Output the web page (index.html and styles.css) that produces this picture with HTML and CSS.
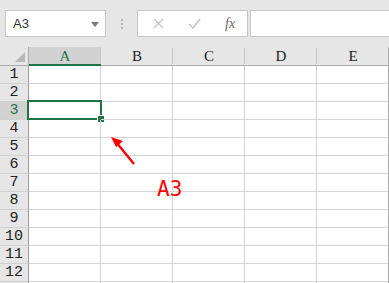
FILE: index.html
```html
<!DOCTYPE html>
<html lang="en">
<head>
    <meta charset="UTF-8">
    <title>Sheet</title>
    <link rel="stylesheet" href="styles.css">
</head>
<body>
    <div class="toolbar">
        <div class="name-box">
            <span>A3</span>
            <svg class="caret" width="8" height="5" viewBox="0 0 8 5"><path d="M0 0h8L4 5z" fill="#7a7a7a"/></svg>
        </div>
        <div class="grip"><i></i><i></i><i></i></div>
        <div class="fx-buttons">
            <svg width="11" height="11" viewBox="0 0 11 11"><path d="M1 1l9 9M10 1l-9 9" stroke="#c4c4c4" stroke-width="1.3"/></svg>
            <svg width="13" height="11" viewBox="0 0 13 11"><path d="M1 6l4 4 7-9" stroke="#c4c4c4" stroke-width="1.6" fill="none"/></svg>
            <span class="fx">fx</span>
        </div>
        <div class="formula"></div>
    </div>

    <div class="sheet">
        <div class="grid">
            <div class="corner"><span></span></div>
            <div class="col-head active">A</div>
            <div class="col-head">B</div>
            <div class="col-head">C</div>
            <div class="col-head">D</div>
            <div class="col-head">E</div>
        </div>
        <div class="grid" id="rows"></div>

        <svg class="arrow" width="60" height="50" viewBox="0 0 60 50">
            <path d="M44 42L26 20" stroke="#f00" stroke-width="2.4"/>
            <path d="M21 15l12 4-7 6z" fill="#f00"/>
        </svg>
        <div class="label">A3</div>
    </div>

    <script>
        const rows = document.getElementById('rows');
        for (let r = 1; r <= 13; r++) {
            const label = r <= 12 ? r : '';
            let html = `<div class="row-head${r === 3 ? ' active' : ''}">${label}</div>`;
            for (let c = 0; c < 5; c++) {
                const sel = r === 3 && c === 0;
                html += `<div class="cell">${sel ? '<div class="selection"><b></b></div>' : ''}</div>`;
            }
            rows.insertAdjacentHTML('beforeend', html);
        }
    </script>
</body>
</html>
```

FILE: styles.css
```css
body {
    margin: 0;
    background: #fff;
    font-family: 'Liberation Sans', Arial, sans-serif;
    height: 283px;
    overflow: hidden;
}
.toolbar {
    background: #e6e6e6;
    height: 47px;
    display: flex;
    align-items: flex-start;
    padding: 10px 0 0 5px;
    box-sizing: border-box;
}
.name-box {
    width: 101px;
    height: 27px;
    box-sizing: border-box;
    background: #fff;
    border: 1px solid #c6c6c6;
    display: flex;
    align-items: center;
    justify-content: space-between;
    padding: 0 6px 0 7px;
    font-size: 13px;
    color: #333;
}
.caret {
    margin-top: 1px;
}
.grip {
    width: 31px;
    height: 27px;
    display: flex;
    flex-direction: column;
    align-items: center;
    justify-content: center;
    gap: 2px;
}
.grip i {
    width: 2px;
    height: 2px;
    background: #b4b4b4;
}
.fx-buttons {
    width: 111px;
    height: 27px;
    box-sizing: border-box;
    background: #fff;
    border: 1px solid #c6c6c6;
    display: flex;
    align-items: center;
    padding: 0 0 0 15px;
    gap: 24px;
}
.fx {
    font-family: 'Liberation Serif', serif;
    font-style: italic;
    font-size: 14px;
    color: #666;
}
.formula {
    flex: 1;
    margin-left: 2px;
    height: 27px;
    box-sizing: border-box;
    background: #fff;
    border: 1px solid #c6c6c6;
    border-right: none;
}
.sheet {
    position: relative;
}
.grid {
    display: grid;
    grid-template-columns: 29px repeat(5, 72px);
}
.corner,
.col-head {
    height: 19px;
    box-sizing: border-box;
    background: #e6e6e6;
    border-bottom: 1px solid #ababab;
}
.corner {
    border-right: 1px solid #ababab;
    position: relative;
}
.corner span {
    position: absolute;
    right: 3px;
    bottom: 3px;
    width: 0;
    height: 0;
    border-left: 10px solid transparent;
    border-bottom: 10px solid #b9b9b9;
}
.col-head {
    font-family: 'Liberation Serif', serif;
    font-size: 15px;
    line-height: 19px;
    text-align: center;
    color: #222;
    position: relative;
}
.col-head::after {
    content: '';
    position: absolute;
    right: 0;
    top: 1px;
    bottom: 1px;
    width: 1px;
    background: #c6c6c6;
}
.col-head.active {
    background: #d2d2d2;
    color: #217346;
    border-bottom: 2px solid #217346;
    line-height: 18px;
}
.col-head:last-child::after {
    background: #ababab;
    top: 0;
    bottom: 0;
}
.row-head {
    height: 18px;
    box-sizing: border-box;
    background: #e6e6e6;
    border-right: 1px solid #9b9b9b;
    border-bottom: 1px solid #d0d0d0;
    font-family: 'Liberation Mono', monospace;
    font-size: 15px;
    line-height: 18px;
    text-align: center;
    color: #222;
}
.row-head.active {
    background: #d2d2d2;
    color: #217346;
}
.cell {
    height: 18px;
    box-sizing: border-box;
    border-right: 1px solid #d4d4d4;
    border-bottom: 1px solid #d4d4d4;
    position: relative;
}
.cell:nth-child(6n) {
    border-right-color: #ababab;
}
.selection {
    position: absolute;
    left: -2px;
    top: -2px;
    right: -2px;
    bottom: -1px;
    border: 2px solid #217346;
}
.selection b {
    position: absolute;
    right: -5px;
    bottom: -5px;
    width: 6px;
    height: 6px;
    background: #217346;
    border: 1px solid #fff;
}
.arrow {
    position: absolute;
    left: 90px;
    top: 75px;
}
.label {
    position: absolute;
    left: 157px;
    top: 130px;
    font-family: 'DejaVu Sans Mono', monospace;
    font-size: 21px;
    color: #f00;
}
```
